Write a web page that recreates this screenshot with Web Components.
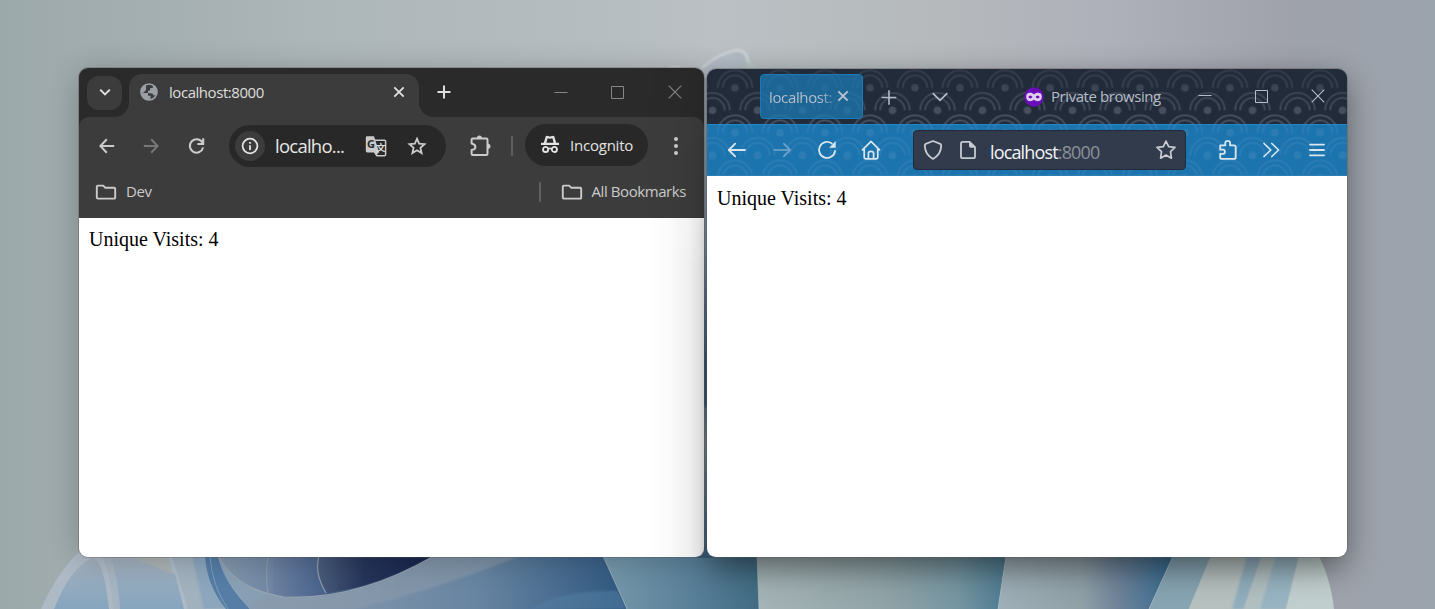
<!DOCTYPE html>
<html lang="en"><head><meta charset="utf-8"><title>Unique Visits</title>
<style>html,body{margin:0;height:100%;overflow:hidden}</style></head>
<body><visit-desktop></visit-desktop>
<script>
const define=(name,html)=>customElements.define(name,class extends HTMLElement{
  constructor(){super();const t=document.createElement('template');t.innerHTML=html;
  this.attachShadow({mode:'open'}).append(t.content.cloneNode(true));}
});
// Glyphs are drawn in a 24x24 box centred on the origin.
const S='fill="none" stroke="currentColor" ';
const glyphs={
 down:`<path ${S}stroke-width="2" d="M-4.8-2.4 0 2.4 4.8-2.4"/>`,
 globe:`<circle r="8" ${S}stroke-width="1.7"/><path fill="currentColor" d="M-8 1-1 1-1 3.8 1.5 3.8 1.5 7.8Q-4 9-7 4ZM-6.5 1.5-3-2-3-6.5Q1-9 4-7L3.8-4 1-3.8 1-1.4-1-1.2-1 1 3.5 1.4 4.5 3.5 7 3Q9-1 6-5L3-8-4-7.5Q-9-3-8 1Z"/>`,
 close:`<path ${S}stroke-width="1.9" d="M-4.7-4.7 4.7 4.7M4.7-4.7-4.7 4.7"/>`,
 plus:`<path ${S}stroke-width="2" d="M-6.5 0H6.5M0-6.5V6.5"/>`,
 min:`<path ${S}stroke-width="1" d="M-6.5.5H6.5"/>`,
 max:`<path ${S}stroke-width="1" d="M-5.5-5.5H6.5V6.5H-5.5Z"/>`,
 xthin:`<path ${S}stroke-width="1.1" d="M-6.3-6.3 6.3 6.3M6.3-6.3-6.3 6.3"/>`,
 back:`<path ${S}stroke-width="2" d="M7.2 0H-6M-.2-6.7-6.6 0-.2 6.7"/>`,
 fwd:`<path ${S}stroke-width="2" d="M-7.2 0H6M.2-6.7 6.6 0 .2 6.7"/>`,
 reload:`<path ${S}stroke-width="2" d="M5.4-3.4A6.7 6.7 0 1 0 6.1 1.4M6.2-7.8V-2H.4"/>`,
 info:`<circle r="7.4" ${S}stroke-width="1.8"/><path ${S}stroke-width="1.8" d="M0-.8V4M0-4V-2.2"/>`,
 star:`<path ${S}stroke-width="1.8" stroke-linejoin="miter" d="M0-7.3 2.1-2.3 7.5-1.8 3.4 1.8 4.6 7.1 0 4.3-4.6 7.1-3.4 1.8-7.5-1.8-2.1-2.3Z"/>`,
 puzzle:`<path fill="currentColor" d="M-3.1-7.6V-8A2.5 2.5 0 0 1 1.9-8V-7.6ZM7.6-2.3H8A2.5 2.5 0 0 1 8 2.7H7.6Z"/><path ${S}stroke-width="2" stroke-linejoin="round" d="M-7.2-7.4H6.3Q7.5-7.4 7.5-6.2V7.7Q7.5 8.9 6.3 8.9H-7.2Q-8.4 8.9-8.4 7.7V4.1Q-4.6 3.4-4.6.9T-8.4-2.4V-6.2Q-8.4-7.4-7.2-7.4Z"/>`,
 incog:`<path fill="currentColor" d="M-4.4-8.2Q-3.8-9.6-2.3-9.1L0-8.4 2.3-9.1Q3.8-9.6 4.4-8.2L6.2-2.2H9V0H-9V-2.2H-6.2ZM-3.6-2.2H3.6L2.4-6.8 0-6.2-2.4-6.8Z" fill-rule="evenodd"/><g ${S}stroke-width="1.8"><circle cx="-4.4" cy="4.4" r="2.6"/><circle cx="4.4" cy="4.4" r="2.6"/><path d="M-1.8 3.8Q0 2.8 1.8 3.8"/></g>`,
 dots:`<g fill="currentColor"><circle cy="-7" r="2"/><circle r="2"/><circle cy="7" r="2"/></g>`,
 folder:`<path ${S}stroke-width="1.9" stroke-linejoin="round" d="M-8.2-6.4H-2.8L-.6-4.2H8.2Q9.2-4.2 9.2-3.2V5.5Q9.2 6.6 8.2 6.6H-8.2Q-9.2 6.6-9.2 5.5V-5.4Q-9.2-6.4-8.2-6.4Z"/>`,
 fback:`<path ${S}stroke-width="1.8" stroke-linecap="round" stroke-linejoin="round" d="M8 0H-8M-1.8-6.4-8.2 0-1.8 6.4"/>`,
 ffwd:`<path ${S}stroke-width="1.6" stroke-linecap="round" stroke-linejoin="round" d="M-8 0H8M1.8-6.4 8.2 0 1.8 6.4"/>`,
 freload:`<path ${S}stroke-width="1.8" stroke-linecap="round" d="M4.8-6.5A8 8 0 1 0 8 .8"/><path fill="currentColor" d="M8.7-8.9V-2.2H2.2Z"/>`,
 home:`<path ${S}stroke-width="1.7" stroke-linejoin="round" stroke-linecap="round" d="M-8.5-.2 0-8.6 8.5-.2M-6.8-1.8V7Q-6.8 8.8-5 8.8H5Q6.8 8.8 6.8 7V-1.8M-2.6 8.6V3.4Q-2.6 1.4 0 1.4T2.6 3.4V8.6"/>`,
 shield:`<path ${S}stroke-width="1.8" stroke-linejoin="round" d="M0-9 7.2-6.2Q8.2-5.7 8.2-4.4C8.2 2 5.2 6 0 9-5.2 6-8.2 2-8.2-4.4Q-8.2-5.7-7.2-6.2Z"/>`,
 page:`<path ${S}stroke-width="1.8" stroke-linejoin="round" d="M1.6-8.2H-5.2Q-7-8.2-7-6.4V6.4Q-7 8.2-5.2 8.2H5.2Q7 8.2 7 6.4V-2.8Z"/><path fill="currentColor" d="M1-8.5 7.4-2.2H2.8Q1-2.2 1-4Z"/>`,
 fstar:`<path ${S}stroke-width="1.7" stroke-linejoin="round" d="M0-8.9 2.7-3.4 9-2.6 4.5 1.7 5.4 8.2 0 5.1-5.4 8.2-4.5 1.7-9-2.6-2.7-3.4Z"/>`,
 fext:`<path ${S}stroke-width="1.8" stroke-linejoin="round" d="M-7.8-4.6H-2.7V-7Q-2.7-9.2-.3-9.2T2.1-7V-4.6H6Q7.7-4.6 7.7-2.9V7.2Q7.7 8.9 6 8.9H-6.1Q-7.8 8.9-7.8 7.2V3.9H-5.1Q-3.1 3.9-3.1 1.8T-5.1-.3H-7.8V-4.6Z"/>`,
 chev:`<path ${S}stroke-width="1.7" stroke-linecap="round" stroke-linejoin="round" d="M-7-6.5-.2 0-7 6.5M.8-6.5 7.6 0 .8 6.5"/>`,
 menu:`<path ${S}stroke-width="1.8" stroke-linecap="round" d="M-7-5.4H7M-7 0H7M-7 5.4H7"/>`,
 fdown:`<path ${S}stroke-width="1.7" stroke-linecap="round" d="M-6.8-3.4 0 3.4 6.8-3.4"/>`,
 fplus:`<path ${S}stroke-width="1.6" d="M-7.3.5H7.3M0-6.8V7.8"/>`,
 mask:`<circle r="9.7" fill="#6b0dbb"/><path fill="#e0cff0" d="M0-2.6C1.8-4.6 7.8-5.4 7.8-.4 7.8 5.6 2 4.8 0 2.6-2 4.8-7.8 5.6-7.8-.4-7.8-5.4-1.8-4.6 0-2.6Z"/><path fill="#6b0dbb" d="M-5.8 0Q-3.6-3.2-1.5 0-3.6 2.8-5.8 0ZM5.8 0Q3.6-3.2 1.5 0 3.6 2.8 5.8 0Z"/>`
};
customElements.define('ui-icon',class extends HTMLElement{
 connectedCallback(){if(this.shadowRoot)return;this.attachShadow({mode:'open'}).innerHTML=
 `<style>:host{display:block;width:24px;height:24px;flex:none}svg{display:block;overflow:visible}</style><svg width="24" height="24" viewBox="-12 -12 24 24">${glyphs[this.getAttribute('name')]||''}</svg>`}
});
define('translate-icon',`<style>:host{display:block;width:24px;height:24px;flex:none;font:bold 11px "Open Sans",sans-serif}svg{display:block;overflow:visible}</style>
<svg width="24" height="24" viewBox="-12 -12 24 24"><path fill="none" stroke="#c9c9c9" stroke-width="1.5" d="M-1-5.8H8.5Q9.6-5.8 9.6-4.7V8.6Q9.6 9.7 8.5 9.7H1L-1.5 6"/><path fill="#c9c9c9" d="M-8.8-9.8H-2L3.2 6.4H-8.8Q-10.2 6.4-10.2 5V-8.4Q-10.2-9.8-8.8-9.8ZM-1.5 6H3.2L0 9.7Z"/><text x="-9" y="2.3" fill="#292929">G</text><text x="0" y="5.3" fill="#dedede" style="font:bold 9.5px 'Noto Sans CJK SC',sans-serif">文</text></svg>`);

define('page-content',`<style>:host{display:block;flex:1;padding:10px;background:#fff;color:#000;font:20px/22px "Liberation Serif",serif}</style><span><slot></slot></span>`);

define('chrome-tabs',`<style>
:host{display:flex;align-items:center;height:49px;box-sizing:border-box;padding-left:8px;background:#2a2a2a;color:#dedede;font:15px/20px "Open Sans",sans-serif}
.search{display:grid;place-items:center;width:35px;height:34px;border-radius:12px;background:#3c3c3c}
.tab{position:relative;display:flex;align-items:center;align-self:flex-end;width:290px;height:43px;margin-left:7px;padding:0 8px;box-sizing:border-box;border-radius:13px 13px 0 0;background:#3c3c3c}
.tab::before,.tab::after{content:"";position:absolute;bottom:0;width:14px;height:14px}
.tab::before{left:-14px;background:radial-gradient(circle at 0 0,transparent 13.5px,#3c3c3c 14.2px)}
.tab::after{right:-14px;background:radial-gradient(circle at 100% 0,transparent 13.5px,#3c3c3c 14.2px)}
.tab ui-icon,.tab span{margin-top:-7px}.tab span{margin-left:8px;flex:1;letter-spacing:-.45px}
.w{color:#868686;margin-top:-1px}</style>
<div class="search"><ui-icon name="down" style="margin:-2px 0 0 0"></ui-icon></div>
<div class="tab"><ui-icon name="globe" style="color:#9aa0a6"></ui-icon><span>localhost:8000</span><ui-icon name="close"></ui-icon></div>
<ui-icon name="plus" style="margin:-2px 0 0 13px"></ui-icon>
<ui-icon class="w" name="min" style="margin-left:93px"></ui-icon><ui-icon class="w" name="max" style="margin-left:32px"></ui-icon><ui-icon class="w" name="xthin" style="margin-left:34px"></ui-icon>`);

define('chrome-toolbar',`<style>
:host{display:block;background:#2a2a2a;color:#cbcbcb;font:15px/20px "Open Sans",sans-serif}
.panel{background:#3c3c3c;border-radius:10px 10px 0 0;height:101px}
.row,.url,.pill{display:flex;align-items:center}.nav{height:57px;padding-left:16px}
.url{width:217px;height:42px;border-radius:21px;background:#282828;margin-left:20px}
.info{display:grid;place-items:center;width:30px;height:30px;margin-left:6px;border-radius:50%;background:#3c3c3c;color:#e3e3e3}
.url span{width:89px;margin-left:10px;color:#e6e6e6;font-size:18.5px;letter-spacing:-.75px}
.bar{width:2px;height:20px;border-radius:1px;background:#606060}
.pill{width:123px;height:42px;margin:-1px 0 0 12px;border-radius:21px;background:#282828;color:#e3e3e3}
.pill span{margin-left:8px;letter-spacing:-.22px}
.marks{height:35px;padding:0 18px 0 15px}.marks span{margin:-1px 0 0 8px;letter-spacing:-.42px}.sp{flex:1}</style>
<div class="panel"><div class="row nav">
<ui-icon name="back"></ui-icon><ui-icon name="fwd" style="margin-left:20px;color:#777"></ui-icon><ui-icon name="reload" style="margin-left:22px"></ui-icon>
<div class="url"><div class="info"><ui-icon name="info"></ui-icon></div><span>localho...</span><translate-icon></translate-icon><ui-icon name="star" style="margin-left:17px"></ui-icon></div>
<ui-icon name="puzzle" style="margin-left:22px"></ui-icon><div class="bar" style="margin-left:19px"></div>
<div class="pill"><ui-icon name="incog" style="margin-left:13px"></ui-icon><span>Incognito</span></div><ui-icon name="dots" style="margin-left:16px"></ui-icon></div>
<div class="row marks"><ui-icon name="folder"></ui-icon><span>Dev</span><div class="sp"></div><div class="bar"></div><ui-icon name="folder" style="margin-left:18.5px"></ui-icon><span class="all">All Bookmarks</span></div></div>`);

define('chrome-window',`<style>:host{display:flex;position:relative;flex-direction:column;width:625px;height:489px;border-radius:9px;overflow:hidden}
.shade{position:absolute;inset:0 0 0 auto;width:60px;background:linear-gradient(90deg,transparent,rgba(0,0,0,.016) 40%,rgba(0,0,0,.06) 75%,rgba(0,0,0,.12) 92%,rgba(0,0,0,.19));-webkit-mask:linear-gradient(rgba(0,0,0,.4),#000 200px)}</style>
<chrome-tabs></chrome-tabs><chrome-toolbar></chrome-toolbar><page-content><slot></slot></page-content><div class="shade"></div>`);

// Seigaiha wave theme that runs behind both Firefox bars.
define('wave-theme',`<style>:host{position:absolute;inset:0 0 auto 0;height:107px}svg{display:block}</style>
<svg width="640" height="107"><defs>
<linearGradient id="g" gradientUnits="userSpaceOnUse" x1="0" y1="0" x2="0" y2="55"><stop stop-color="#fff" stop-opacity=".05"/><stop offset="1" stop-color="#fff" stop-opacity=".24"/></linearGradient>
<mask id="m"><rect width="640" height="55" fill="url(#g)"/></mask>
<pattern id="p" width="45" height="45" patternUnits="userSpaceOnUse" x="5.5" y="-3.7">
<g fill="none" stroke="#d6ddec" stroke-width="1.7"><path d="M5.2 22.5A17.3 17.3 0 0 1 39.8 22.5M10.2 22.5A12.3 12.3 0 0 1 34.8 22.5"/><path d="M-17.3 45A17.3 17.3 0 0 1 17.3 45M-12.3 45A12.3 12.3 0 0 1 12.3 45M27.7 45A17.3 17.3 0 0 1 62.3 45M32.7 45A12.3 12.3 0 0 1 57.3 45"/></g>
<g fill="#d6ddec"><circle cx="22.5" cy="22.5" r="3.8"/><circle cx="0" cy="0" r="3.8"/><circle cx="45" cy="0" r="3.8"/><circle cx="0" cy="45" r="3.8"/><circle cx="45" cy="45" r="3.8"/></g></pattern></defs>
<rect width="640" height="55" fill="#222b3a"/><rect width="640" height="55" fill="url(#p)" opacity=".06"/><rect width="640" height="55" fill="url(#p)" mask="url(#m)" opacity=".8"/>
<rect y="55" width="640" height="52" fill="#1c74ae"/><rect y="55" width="640" height="52" fill="url(#p)" opacity=".09"/>
<rect y="55" width="640" height="1" fill="#1d88cd"/><rect y="106" width="640" height="1" fill="#2c80b6"/></svg>`);

define('fox-tabs',`<style>
:host{display:flex;position:relative;align-items:center;height:55px;padding-left:53px;box-sizing:border-box;color:#b5bdc8;font:15px/20px "Open Sans",sans-serif}
.tab{display:flex;align-items:center;width:103px;height:45px;box-sizing:border-box;border:1px solid #197bbb;border-radius:4px;background:rgba(27,124,183,.72);padding-left:8px}
.tab span{width:64px;margin-right:-2px;white-space:nowrap;letter-spacing:-.36px;-webkit-mask:linear-gradient(90deg,#000 80%,rgba(0,0,0,.4))}
.p{margin:-1px 0 0 5px;width:110px;white-space:nowrap;letter-spacing:-.43px}</style>
<div class="tab"><span>localhost:</span><ui-icon name="close" style="margin-top:-1px;color:#b6c4d1"></ui-icon></div>
<ui-icon name="fplus" style="margin-left:14px"></ui-icon><ui-icon name="fdown" style="margin-left:27px"></ui-icon>
<ui-icon name="mask" style="margin-left:70px"></ui-icon><div class="p">Private browsing</div>
<ui-icon name="min" style="margin-left:32px;margin-top:-3px"></ui-icon><ui-icon name="max" style="margin-left:32px;margin-top:-1px"></ui-icon><ui-icon name="xthin" style="margin-left:33px;margin-top:-1px"></ui-icon>`);

define('fox-toolbar',`<style>
:host{display:flex;position:relative;align-items:center;height:52px;padding-left:18px;box-sizing:border-box;color:#d9e6ef;font:18px/24px "Open Sans",sans-serif}
.url{display:flex;align-items:center;width:273px;height:40px;box-sizing:border-box;border:1px solid #202a3b;border-radius:4px;background:#323b4b;margin-left:30px;color:#c7cbd1}
.url span{margin:3px 0 0 10px;width:111px;color:#f2f4f7;letter-spacing:-.85px;white-space:nowrap}i{font-style:normal;color:#8b9099}</style>
<ui-icon name="fback"></ui-icon><ui-icon name="ffwd" style="margin-left:21px;color:#74a6ca"></ui-icon><ui-icon name="freload" style="margin-left:21px"></ui-icon><ui-icon name="home" style="margin-left:20px"></ui-icon>
<div class="url"><ui-icon name="shield" style="margin-left:7px"></ui-icon><ui-icon name="page" style="margin-left:11px"></ui-icon><span>localhost<i>:8000</i></span><ui-icon name="fstar" style="margin-left:53px"></ui-icon></div>
<ui-icon name="fext" style="margin-left:30px"></ui-icon><ui-icon name="chev" style="margin-left:19px"></ui-icon><ui-icon name="menu" style="margin-left:22px"></ui-icon>`);

define('fox-window',`<style>:host{display:flex;position:relative;flex-direction:column;width:640px;height:488px;border-radius:9px;overflow:hidden}page-content{padding-top:11px}</style>
<wave-theme></wave-theme><fox-tabs></fox-tabs><fox-toolbar></fox-toolbar><page-content><slot></slot></page-content>`);

define('desk-wallpaper',`<style>:host{position:absolute;inset:0}svg{display:block}</style>
<svg width="1435" height="609" viewBox="0 0 1435 609"><defs>
<linearGradient id="sky"><stop stop-color="#9ca9aa"/><stop offset=".22" stop-color="#adb6b9"/><stop offset=".5" stop-color="#bac0c3"/><stop offset=".66" stop-color="#b5b9bc"/><stop offset=".78" stop-color="#adb0b9"/><stop offset=".9" stop-color="#9fa2ab"/><stop offset="1" stop-color="#9ba3ac"/></linearGradient>
<linearGradient id="a" x2="0" y2="1"><stop stop-color="#a3b0bd"/><stop offset="1" stop-color="#86a5bf"/></linearGradient>
<linearGradient id="b"><stop stop-color="#8ba1b6"/><stop offset=".35" stop-color="#7d93aa"/><stop offset=".65" stop-color="#6583a0"/><stop offset="1" stop-color="#2f5780"/></linearGradient>
<linearGradient id="c"><stop stop-color="#8599ad"/><stop offset=".25" stop-color="#6f86a3"/><stop offset=".26" stop-color="#6b80a0"/><stop offset=".5" stop-color="#46608a"/><stop offset="1" stop-color="#1c2a4c"/></linearGradient>
<linearGradient id="n"><stop stop-color="#4a5d7c"/><stop offset=".4" stop-color="#25345a"/><stop offset="1" stop-color="#17234a"/></linearGradient>
<linearGradient id="d"><stop stop-color="#7698aa"/><stop offset=".55" stop-color="#5a8099"/><stop offset="1" stop-color="#416c84"/></linearGradient>
<linearGradient id="e"><stop stop-color="#a5b4b6"/><stop offset=".5" stop-color="#91a4a8"/><stop offset=".8" stop-color="#7696a1"/><stop offset="1" stop-color="#4e7b92"/></linearGradient>
<linearGradient id="f"><stop stop-color="#9eafb7"/><stop offset=".48" stop-color="#8fa0a7"/><stop offset=".68" stop-color="#70849a"/><stop offset="1" stop-color="#356a90"/></linearGradient>
<linearGradient id="slit" x2="0" y2="1"><stop stop-color="#858d95"/><stop offset=".35" stop-color="#5f707e"/><stop offset=".6" stop-color="#2b435b"/><stop offset=".68" stop-color="#2b435b"/><stop offset=".69" stop-color="#455966"/><stop offset=".76" stop-color="#5a6970"/><stop offset="1" stop-color="#2c4a60"/></linearGradient>
<filter id="s" x="-20%" width="140%" y="-20%" height="140%"><feGaussianBlur stdDeviation="16"/></filter><filter id="s2"><feGaussianBlur stdDeviation=".8"/></filter></defs>
<rect width="1435" height="609" fill="url(#sky)"/>
<path d="M663 71Q672 63 682 68L684 74H660Z" fill="#c9d0d2" filter="url(#s2)"/>
<g filter="url(#s2)"><path d="M701 69Q718 53 738 50Q747 50 749 69L760 76H700Z" fill="#b3bcc5"/><path d="M740 50Q752 60 760 72H746Q749 59 740 50Z" fill="#b9c6c6"/><path d="M702 68Q719 53 737 50Q747 50 748 62" fill="none" stroke="#d3dade" stroke-width="2"/></g>
<path d="M41 609Q58 570 83 548H620V609Z" fill="#adbac6"/>
<path d="M54 609Q70 568 92 558Q104 559 109 609Z" fill="url(#a)"/>
<path d="M113 609Q109 565 101 556H168L184 609Z" fill="#a6b4c1"/><path d="M120 609Q117 571 110 556H130L175 574 184 609Z" fill="url(#a)"/>
<path d="M132 556H166L172 574Q148 564 132 556Z" fill="#acb2b2" filter="url(#s2)"/>
<path d="M172 556H206V609H188Z" fill="#a1b1be"/><path d="M192 556H222L250 609H204Z" fill="#8ba6bd" filter="url(#s2)"/><path d="M205 556H218Q224 583 250 609H226Q207 586 205 556Z" fill="#557da6"/><path d="M210 556Q212 586 228 609" fill="none" stroke="#7b9dbd"/>
<path d="M218 556H605L627 609H250Q224 583 218 556Z" fill="url(#b)"/>
<path d="M218 556H434Q356 602 284 597Q235 590 218 556Z" fill="url(#c)"/><path d="M319 556H434Q380 586 326 593 314 573 319 556Z" fill="url(#n)"/><path d="M268 556Q265 577 268 594M319 556Q314 573 326 593" fill="none" stroke="#8b98a8" stroke-width="1.3"/><path d="M218 556Q236 590 284 597Q356 601 434 556" fill="none" stroke="#98a5b2" stroke-width="1.2"/>
<path d="M434 556H520Q440 589 355 609H250Q250 596 284 597Q356 601 434 556Z" fill="#8b9aaa" opacity=".6" filter="url(#s2)"/>
<path d="M530 609Q560 590 617 591L627 609Z" fill="#5580a5" opacity=".5" filter="url(#s2)"/>
<path d="M603 556H759V609H627Z" fill="url(#d)"/><path d="M757 556H1006L998 609H759Z" fill="url(#e)"/><path d="M1006 556H1173L1149 609H998Z" fill="url(#f)"/>
<path d="M1173 556H1211L1189 609H1149Z" fill="#86a4b1"/><path d="M1211 556H1262L1244 609H1189Z" fill="#b5c0bf"/><path d="M1247 556H1262L1244 609H1232Z" fill="#91aebd" filter="url(#s2)"/><path d="M1262 556H1299L1286 609H1244Z" fill="#b1bfc0"/><path d="M1276 556H1299L1286 609H1260Z" fill="#98b4c2" filter="url(#s2)"/><path d="M1299 556H1319Q1331 580 1334 609H1286Z" fill="#c0cecd"/>
<g fill="none" stroke="#b3c2c8" stroke-width="1" opacity=".6"><path d="M603 556 627 609M757 556 759 609M1006 556 998 609M1173 556 1149 609M1211 556 1189 609M1262 556 1244 609M1299 556 1286 609"/></g>
<rect x="79" y="72" width="625" height="486" rx="9" fill="#000" opacity=".24" filter="url(#s)"/>
<rect x="709" y="80" width="636" height="487" rx="9" fill="#000" opacity=".5" filter="url(#s)"/>
<rect x="704" y="78" width="3" height="479" fill="url(#slit)"/><path d="M696 558Q704 556 704 548H707Q707 556 715 558Z" fill="#2f4f66"/>
<rect x="78.5" y="67.5" width="626" height="490" rx="9.5" fill="none" stroke="#555" stroke-opacity=".35"/><rect x="706.5" y="68.5" width="641" height="489" rx="9.5" fill="none" stroke="#555" stroke-opacity=".35"/></svg>`);

define('visit-desktop',`<style>:host{display:flex;position:relative;box-sizing:border-box;width:1435px;height:609px;padding:68px 0 0 79px;gap:3px;overflow:hidden}fox-window{margin-top:1px}</style>
<desk-wallpaper></desk-wallpaper><chrome-window>Unique Visits: 4</chrome-window><fox-window>Unique Visits: 4</fox-window>`);
</script></body></html>
